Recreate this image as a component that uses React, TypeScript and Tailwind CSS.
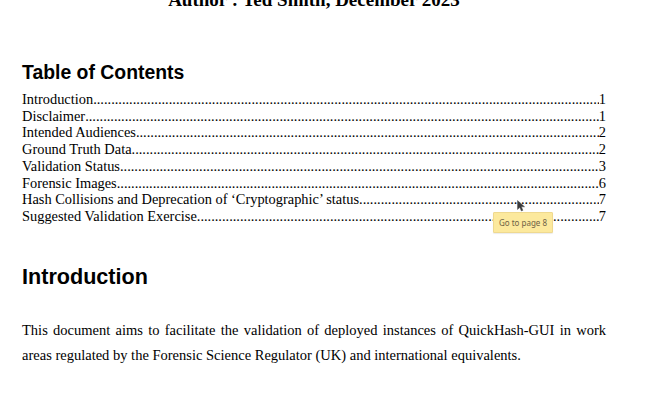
import React from "react";

const toc: [string, string][] = [
  ["Introduction", "1"],
  ["Disclaimer", "1"],
  ["Intended Audiences", "2"],
  ["Ground Truth Data", "2"],
  ["Validation Status", "3"],
  ["Forensic Images", "6"],
  ["Hash Collisions and Deprecation of \u2018Cryptographic\u2019 status", "7"],
  ["Suggested Validation Exercise", "7"],
];

const DOTS = ".".repeat(170);

export default function App() {
  return (
    <div className="w-[650px] h-[400px] overflow-hidden bg-white text-black">
      <div className="relative ml-[22px] w-[584px] flex flex-col">
        <div className="-mt-[11px] h-[22px] text-center text-[19px] leading-[22px] font-bold font-['Liberation_Serif',serif] whitespace-nowrap">
          Author : Ted Smith, December 2023
        </div>

        <h2 className="mt-[50.4px] h-[22px] text-[19.4px] leading-[22px] font-bold font-['Liberation_Sans',Arial,sans-serif]">
          Table of Contents
        </h2>

        <div className="mt-[7.6px] flex flex-col font-['Liberation_Serif',serif] text-[14.4px] leading-[16.75px]">
          {toc.map(([label, page]) => (
            <div key={label} className="flex flex-row whitespace-nowrap">
              <span>{label}</span>
              <span className="flex-1 overflow-hidden">{DOTS}</span>
              <span>{page}</span>
            </div>
          ))}
        </div>

        <h2 className="mt-[40px] h-[24px] text-[21.6px] leading-[24px] font-bold font-['Liberation_Sans',Arial,sans-serif]">
          Introduction
        </h2>

        <p className="mt-[29px] text-justify text-[14.5px] leading-[25px] font-['Liberation_Serif',serif]">
          This document aims to facilitate the validation of deployed instances of QuickHash-GUI in work areas regulated by the Forensic Science Regulator (UK) and international equivalents.
        </p>

        <div className="absolute left-[471px] top-[212px] w-[60px] h-[21px] flex items-center justify-center rounded-[1px] bg-[#fce99d] border border-[#efd98f] shadow-[0_1px_1px_rgba(0,0,0,0.08)] text-[8px] text-[#6e6245] font-['Noto_Sans',sans-serif]">
          Go to page 8
        </div>

        <svg
          className="absolute left-[495px] top-[200px]"
          width="9"
          height="12"
          viewBox="0 0 9 12"
        >
          <path d="M0.5 0.5 L0.5 9.5 L2.8 7.4 L4.4 11 L5.9 10.3 L4.4 6.8 L7.6 6.8 Z" fill="#3a3a3a" stroke="#555" strokeWidth="0.5" />
        </svg>
      </div>
    </div>
  );
}
